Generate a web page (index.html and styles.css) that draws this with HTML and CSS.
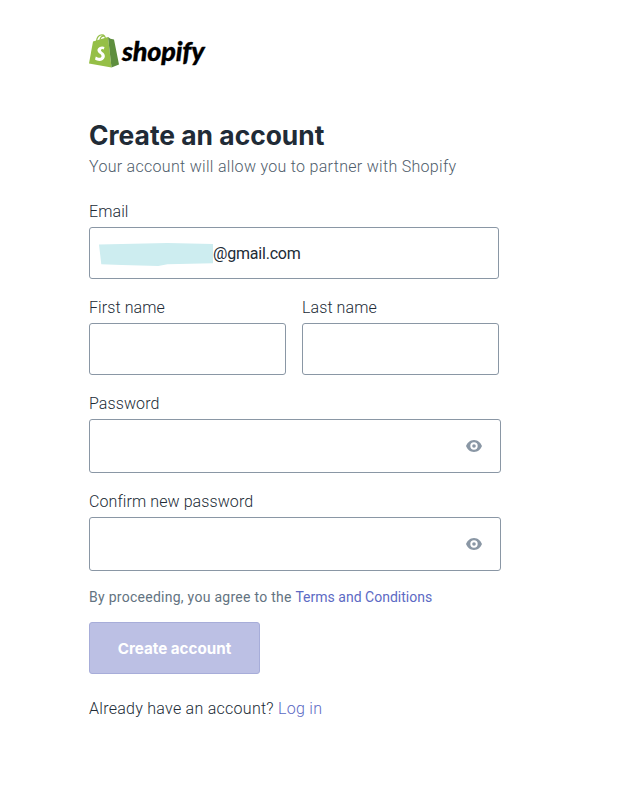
FILE: index.html
```html
<!DOCTYPE html>
<html lang="en">
<head>
<meta charset="utf-8">
<title>Create an account</title>
<link rel="stylesheet" href="styles.css">
</head>
<body>
<main class="page">
  <div class="logo">
    <svg class="bag" viewBox="0 0 30 34" width="30" height="34" aria-hidden="true">
      <path d="M4 7.5 L19 3 L22.5 33.5 L0 29.5 Z" fill="#95bf47"/>
      <path d="M19 3 L21.5 4.8 L25 5.5 L30 30.5 L22.5 33.5 Z" fill="#5e8e3e"/>
      <path d="M7.5 7 C8 3 10.5 .8 13 .8 C15.5 .8 16.5 3 16.5 6 M11 5.8 C11.5 3.5 13 2 15 2.2" fill="none" stroke="#95bf47" stroke-width="1.2"/>
      <path d="M15.5 13 C14 12 9.5 12 8.5 15.5 C7.8 19.5 13 19.5 12.5 22.5 C12 24.5 9 24 6.8 22.5 L6 25.5 C8.5 27.5 14.5 28 15.8 23 C16.5 18.5 11.5 18 12 16 C12.3 14.8 14 15 14.8 15.6 Z" fill="#fff"/>
    </svg>
    <span class="wordmark">shopify</span>
  </div>

  <h1 class="title">Create an account</h1>
  <p class="subtitle">Your account will allow you to partner with Shopify</p>

  <form class="form">
    <div class="field">
      <label class="label">Email</label>
      <div class="input input-email">
        <span class="redact"></span><span class="value">@gmail.com</span>
      </div>
    </div>

    <div class="row">
      <div class="field col-first">
        <label class="label">First name</label>
        <div class="input"></div>
      </div>
      <div class="field col-last">
        <label class="label">Last name</label>
        <div class="input"></div>
      </div>
    </div>

    <div class="field field-pw">
      <label class="label">Password</label>
      <div class="input input-pw">
        <svg class="eye" viewBox="0 0 16 12" width="16" height="12" aria-hidden="true"><path fill-rule="evenodd" d="M8 0C4 0 1.200 3 0 6c1.200 3 4 6 8 6s6.800-3 8-6c-1.200-3-4-6-8-6zm0 2.300a3.700 3.700 0 1 1 0 7.400 3.700 3.700 0 0 1 0-7.400z"/><circle cx="8" cy="6" r="1.800"/></svg>
      </div>
    </div>

    <div class="field field-pw">
      <label class="label">Confirm new password</label>
      <div class="input input-pw">
        <svg class="eye" viewBox="0 0 16 12" width="16" height="12" aria-hidden="true"><path fill-rule="evenodd" d="M8 0C4 0 1.200 3 0 6c1.200 3 4 6 8 6s6.800-3 8-6c-1.200-3-4-6-8-6zm0 2.300a3.700 3.700 0 1 1 0 7.400 3.700 3.700 0 0 1 0-7.400z"/><circle cx="8" cy="6" r="1.800"/></svg>
      </div>
    </div>

    <p class="terms">By proceeding, you agree to the <a class="link link-terms" href="#">Terms and Conditions</a></p>
    <button class="submit" type="button">Create account</button>
    <p class="login">Already have an account? <a class="link" href="#">Log in</a></p>
  </form>
</main>
</body>
</html>
```

FILE: styles.css
```css
* { box-sizing: border-box; }
html, body { margin: 0; background: #fff; }
body { font-family: Roboto, "Noto Sans", sans-serif; color: #212b36; }
.page { width: 623px; height: 796px; padding: 34px 0 0 89px; overflow: hidden; }

.logo { display: flex; align-items: center; height: 34px; gap: 3px; }
.bag { flex: none; }
.wordmark { font-family: Lato, sans-serif; font-style: italic; font-weight: 900; font-size: 27px; line-height: 34px; color: #000; letter-spacing: -0.2px; -webkit-text-stroke: .3px #000; }

.title { margin: 50px 0 0; font-family: Inter, Roboto, sans-serif; font-size: 26.4px; line-height: 34px; font-weight: 700; color: #212b36; }
.subtitle { margin: 5px 0 0; font-size: 16px; line-height: 20px; font-weight: 300; color: #4f5d6b; letter-spacing: .3px; }

.form { margin-top: 24px; width: 412px; display: flex; flex-direction: column; }
.field { display: flex; flex-direction: column; gap: 4px; width: 410px; }
.label { font-size: 16px; line-height: 22px; color: #212b36; font-weight: 300; letter-spacing: .09px; }
.input { height: 52px; border: 1px solid #8a97a5; border-radius: 3px; background: #fff; display: flex; align-items: center; }
.input-email { padding-left: 9px; }
.redact { width: 114px; height: 23px; margin-top: 3px; background: #cdedf0; clip-path: polygon(0 6%, 60% 0, 100% 4%, 100% 88%, 60% 92%, 52% 100%, 20% 96%, 2% 92%); }
.value { font-size: 16px; color: #212b36; letter-spacing: -.2px; }

.row { display: flex; gap: 16px; margin-top: 18px; width: 410px; }
.col-first { width: 197px; }
.col-last { width: 197px; }

.field-pw { width: 412px; margin-top: 18px; }
.input-pw { height: 54px; justify-content: flex-end; padding-right: 18px; }
.eye { fill: #8a97a5; }

.terms { margin: 16px 0 0; font-size: 14px; line-height: 20px; color: #637381; letter-spacing: .27px; }
.link { color: #5c6ac4; text-decoration: none; }
.link-terms { letter-spacing: .01px; }

.submit { margin-top: 15px; width: 171px; height: 52px; border: 1px solid #a7add9; border-radius: 3px; background: #bcc0e4; color: #fff; font-family: Inter, Roboto, sans-serif; font-size: 15.2px; font-weight: 700; padding: 0; }
.login { margin: 24px 0 0; font-size: 16px; line-height: 22px; font-weight: 300; color: #212b36; letter-spacing: .27px; }
```
